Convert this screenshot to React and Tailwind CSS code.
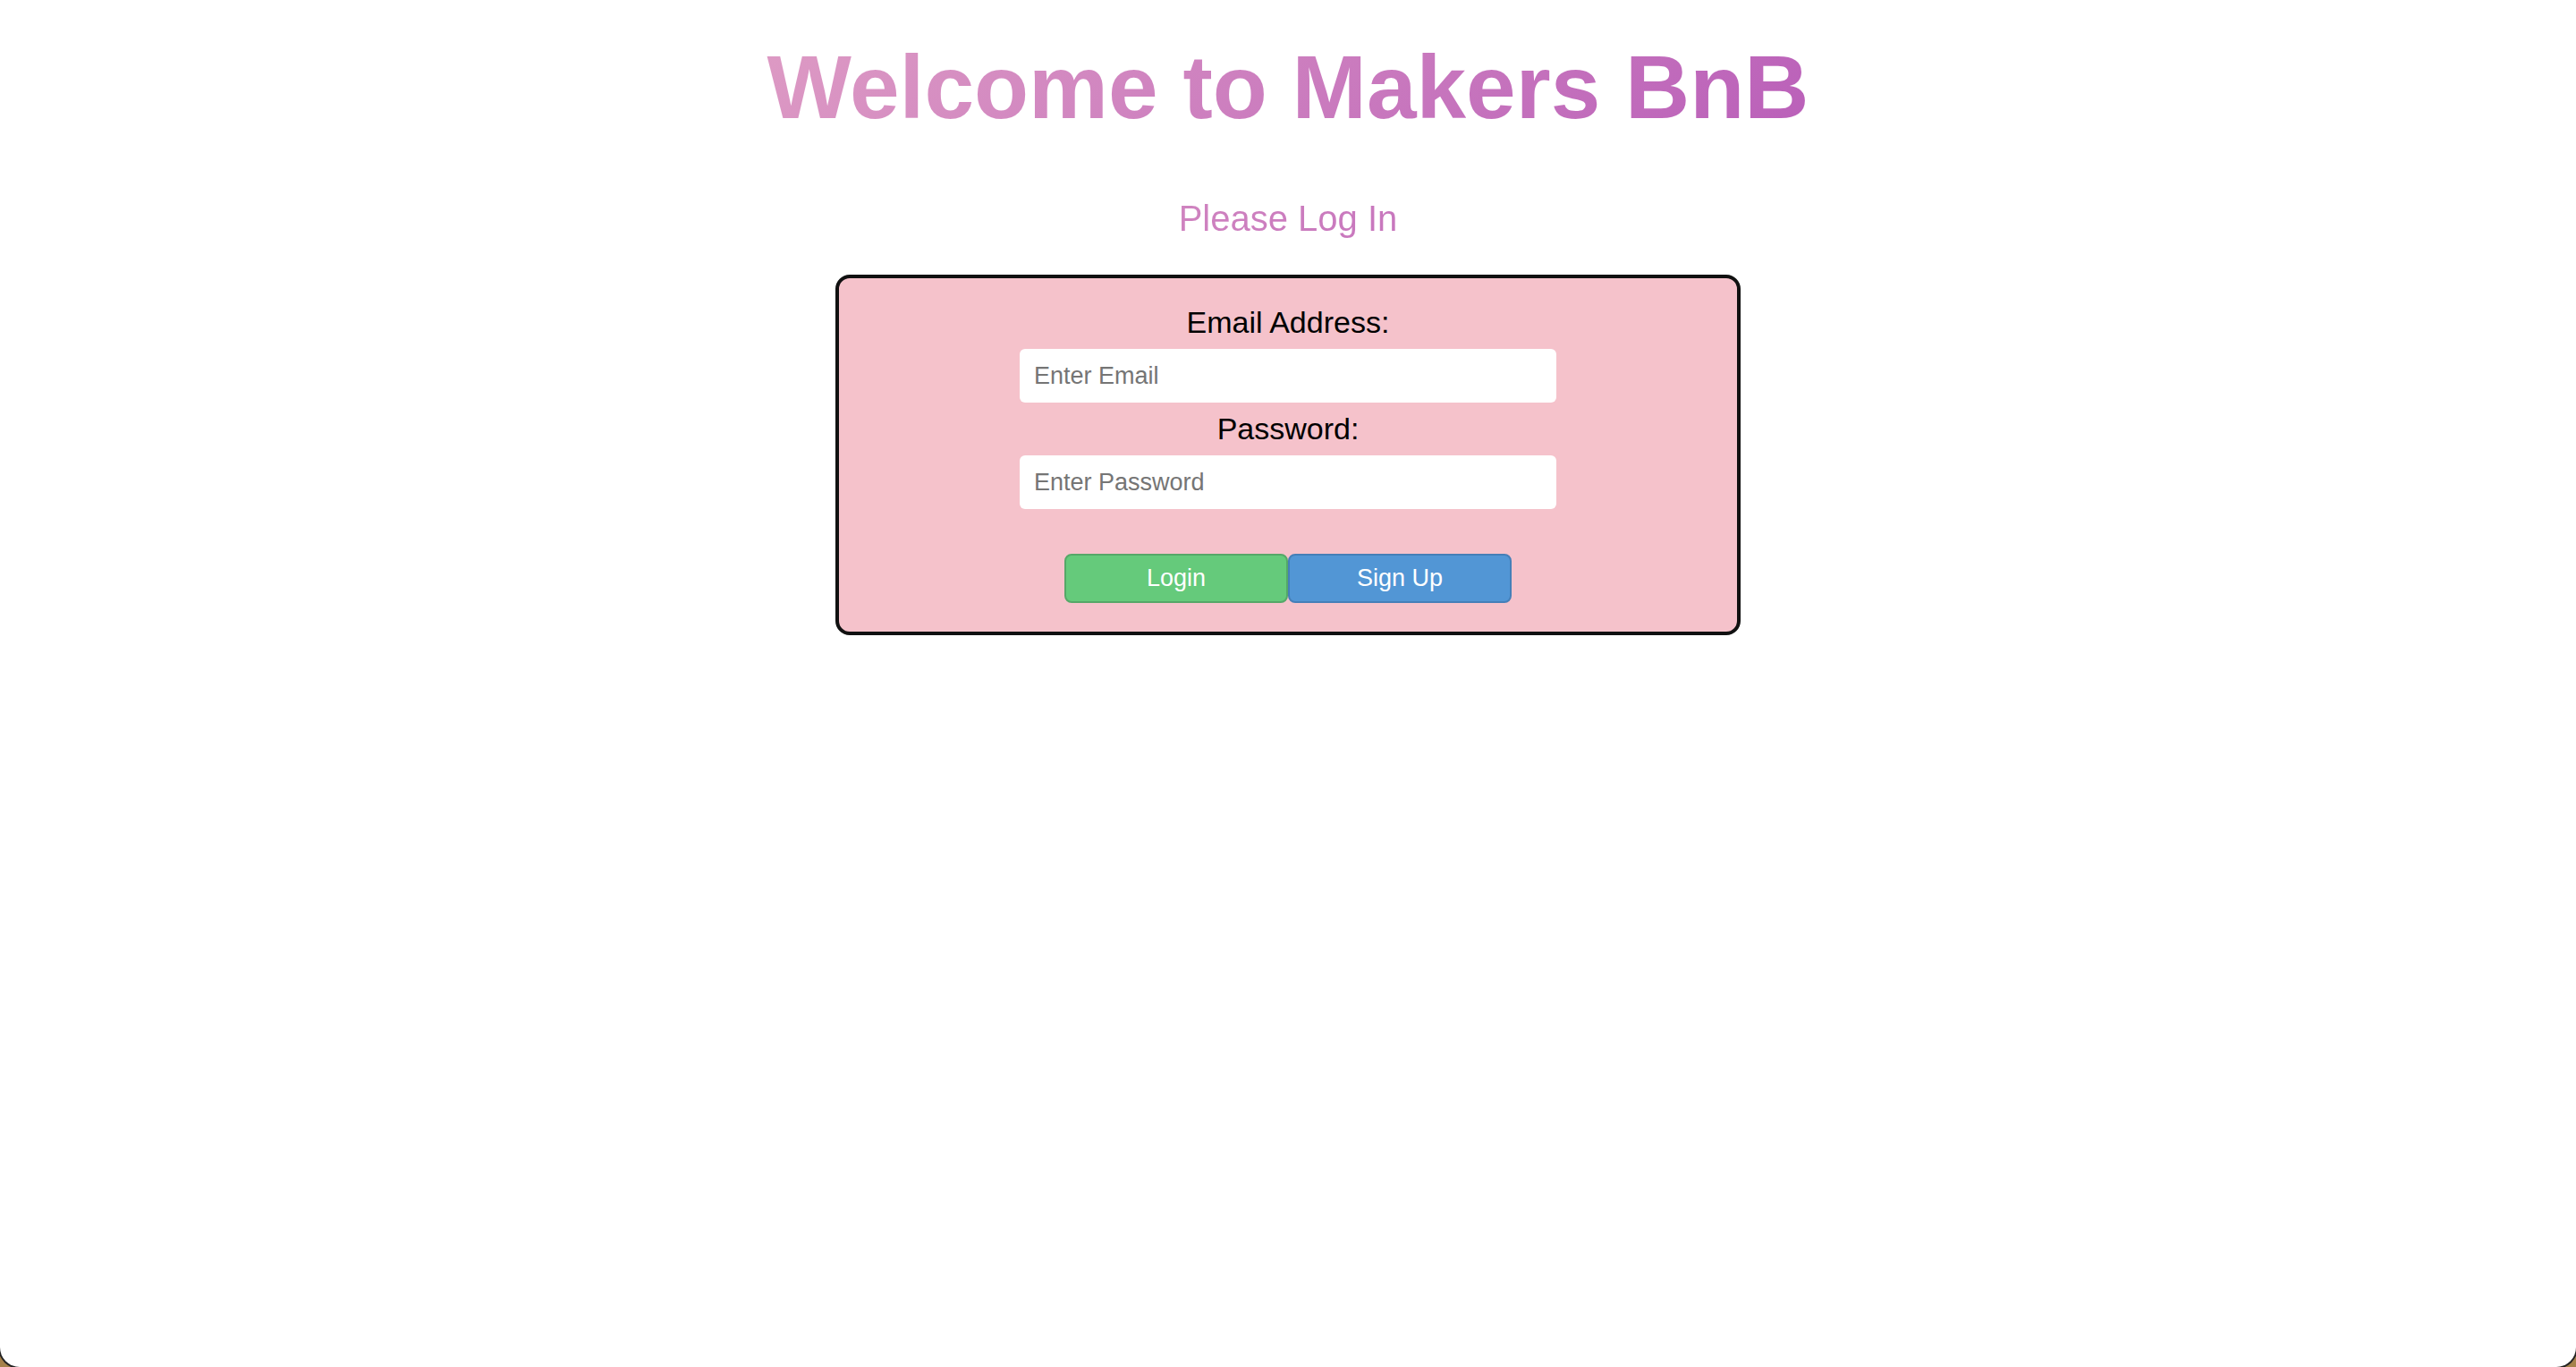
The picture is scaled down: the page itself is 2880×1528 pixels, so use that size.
function Field({ id, label, type, placeholder }) {
  return (
    <div className="flex flex-col items-center gap-[10px]">
      <label htmlFor={id} className="text-[34px] leading-[39px] text-black">
        {label}
      </label>
      <input
        id={id}
        type={type}
        placeholder={placeholder}
        className="h-[60px] w-full rounded-[6px] bg-white px-4 text-[27px] text-black outline-none placeholder:text-[#757575]"
      />
    </div>
  );
}

export default function App() {
  return (
    <div className="min-h-screen overflow-hidden bg-[#a5814a] font-['Liberation_Sans',Arial,sans-serif]">
      <main className="flex min-h-screen flex-col items-center rounded-b-[22px] bg-white pt-10 shadow-[0_0_0_2px_#222222]">
        <h1 className="w-full bg-[linear-gradient(135deg,#f5c2cb,#a238b2)] bg-clip-text text-center text-[100px] leading-[115px] font-bold text-transparent">
          Welcome to Makers BnB
        </h1>
        <h2 className="mt-[66px] w-full bg-[linear-gradient(135deg,#f5c2cb,#a238b2)] bg-clip-text text-center text-[40px] leading-[46px] text-transparent">
          Please Log In
        </h2>
        <form
          onSubmit={(event) => event.preventDefault()}
          className="mt-10 flex w-full max-w-[1012px] flex-col items-center rounded-2xl border-4 border-[#111111] bg-[#f5c2cb] pt-[30px] pb-8"
        >
          <div className="flex w-full max-w-[600px] flex-col gap-[10px]">
            <Field id="email" label="Email Address:" type="email" placeholder="Enter Email" />
            <Field id="password" label="Password:" type="password" placeholder="Enter Password" />
          </div>
          <div className="mt-[50px] grid w-full max-w-[500px] grid-cols-2">
            <button
              type="submit"
              className="h-[55px] rounded-lg border-2 border-[#55a868] bg-[#65ca7b] text-[27px] text-white"
            >
              Login
            </button>
            <button
              type="button"
              className="h-[55px] rounded-lg border-2 border-[#457fb8] bg-[#5296d5] text-[27px] text-white"
            >
              Sign Up
            </button>
          </div>
        </form>
      </main>
    </div>
  );
}
